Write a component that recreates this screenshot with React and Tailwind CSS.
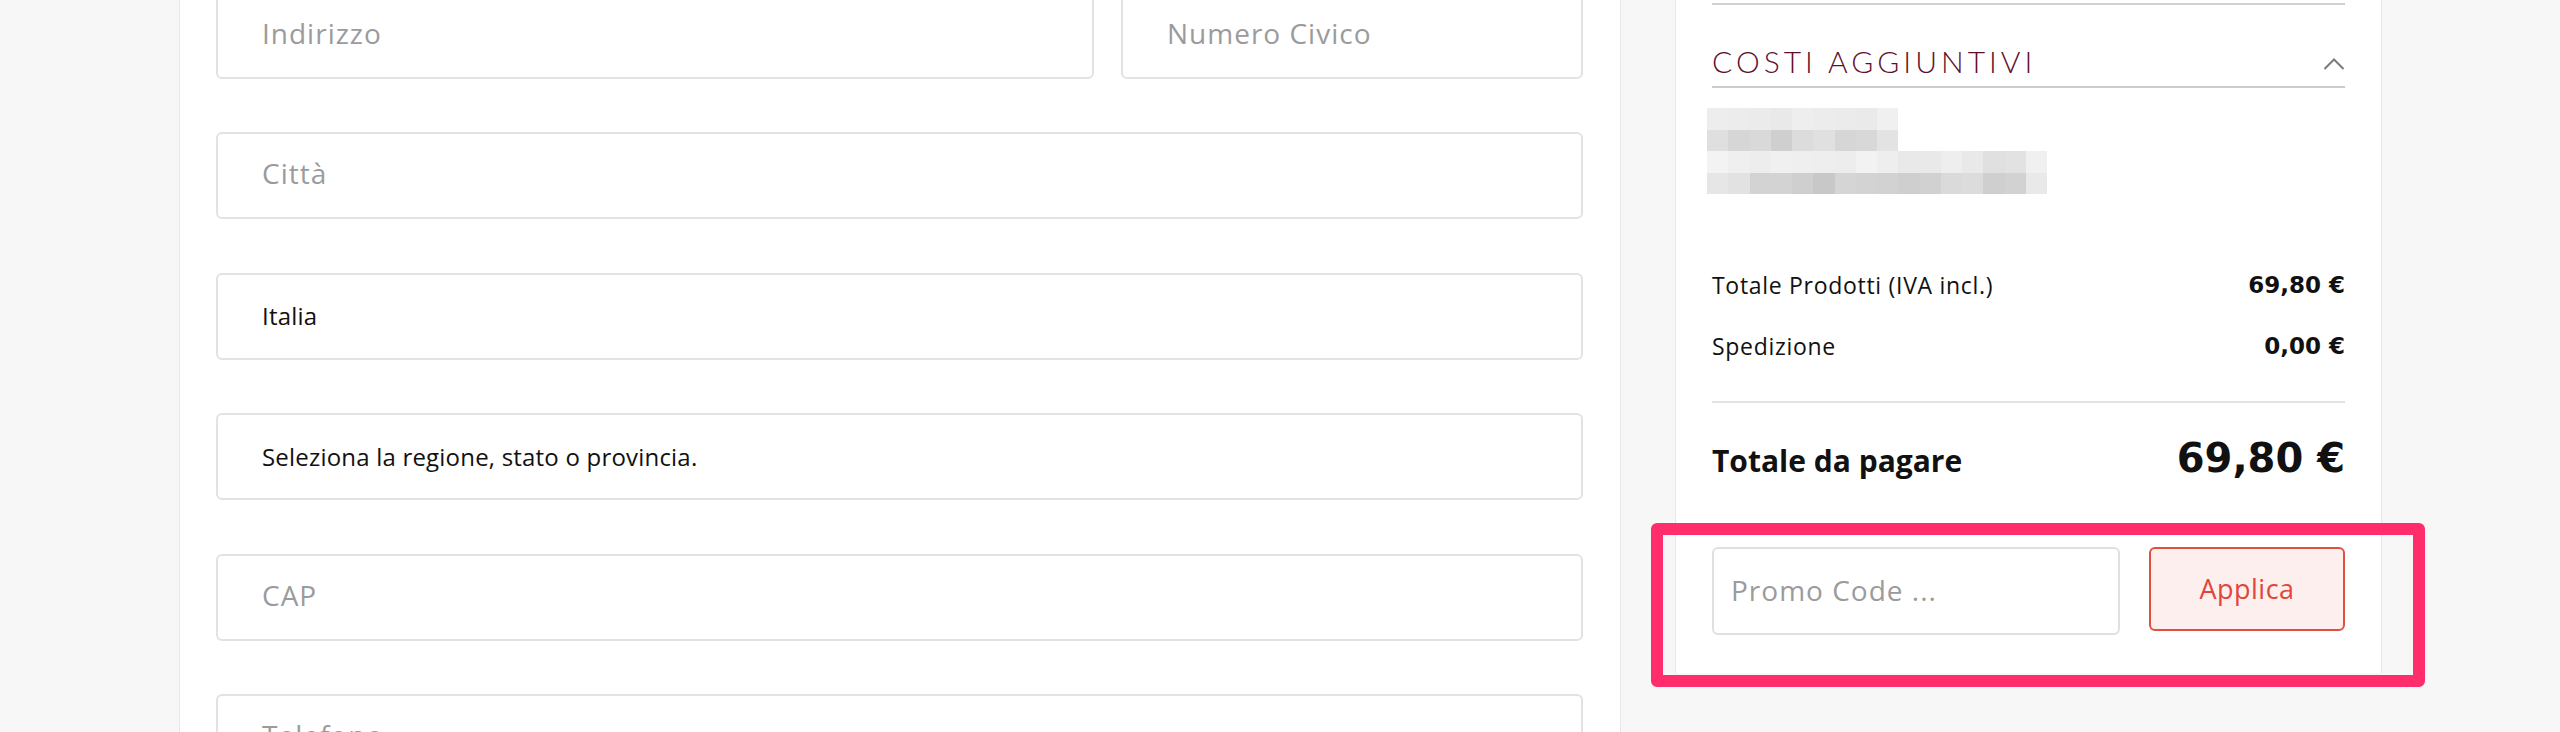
import React from "react";

const r1a = ["bg-[#ededed]","bg-[#ececec]","bg-[#ebebeb]","bg-[#e9e9e9]","bg-[#eeeeee]","bg-[#ececec]","bg-[#ebebeb]","bg-[#eaeaea]","bg-[#f0f0f0]"];
const r1b = ["bg-[#dfdfdf]","bg-[#d6d6d6]","bg-[#d9d9d9]","bg-[#cfcfcf]","bg-[#dcdcdc]","bg-[#e0e0e0]","bg-[#d6d6d6]","bg-[#d8d8d8]","bg-[#e3e3e3]"];
const r2a = ["bg-[#f3f3f3]","bg-[#efefef]","bg-[#ededed]","bg-[#f0f0f0]","bg-[#efefef]","bg-[#eeeeee]","bg-[#ededed]","bg-[#f2f2f2]","bg-[#eeeeee]","bg-[#e9e9e9]","bg-[#e9e9e9]","bg-[#eeeeee]","bg-[#e9e9e9]","bg-[#e0e0e0]","bg-[#e2e2e2]","bg-[#f0f0f0]"];
const r2b = ["bg-[#e6e6e6]","bg-[#e2e2e2]","bg-[#d3d3d3]","bg-[#d3d3d3]","bg-[#cfcfcf]","bg-[#c8c8c8]","bg-[#d5d5d5]","bg-[#d3d3d3]","bg-[#d2d2d2]","bg-[#cfcfcf]","bg-[#d1d1d1]","bg-[#dadada]","bg-[#dcdcdc]","bg-[#cfcfcf]","bg-[#d2d2d2]","bg-[#e9e9e9]"];

function CellRow({ cells }) {
  return (
    <div className="flex h-[21.5px]">
      {cells.map((c, i) => (
        <div key={i} className={`w-[21.25px] h-full ${c}`} />
      ))}
    </div>
  );
}

function Field({ children, value, className = "" }) {
  return (
    <div
      className={`h-[87px] flex items-center pl-[44px] border-2 border-[#e2e2e2] rounded-[6px] bg-white ${value ? "" : "pb-[5px]"} ${className}`}
    >
      {value ? (
        <span className="text-[24px] text-[#111111] tracking-[0.2px]">{value}</span>
      ) : (
        <span className="text-[28px] text-[#9b9b9b] tracking-[1px]">{children}</span>
      )}
    </div>
  );
}

export default function App() {
  return (
    <div className="relative w-[2560px] h-[732px] overflow-hidden bg-[#f7f7f7] font-['Open_Sans',sans-serif] flex">
      {/* left margin */}
      <div className="w-[179px] shrink-0" />

      {/* left form panel */}
      <div className="w-[1442px] shrink-0 h-[732px] overflow-hidden bg-white border-x border-[#e6e6e6] pl-[36px] pr-[37px]">
        <div className="mt-[-8px] flex flex-col gap-[53.4px]">
          <div className="flex gap-[27px]">
            <Field className="w-[878px]">Indirizzo</Field>
            <Field className="flex-1">Numero Civico</Field>
          </div>
          <Field>Città</Field>
          <Field value="Italia" />
          <Field value="Seleziona la regione, stato o provincia." />
          <Field>CAP</Field>
          <Field>Telefono</Field>
        </div>
      </div>

      {/* gap */}
      <div className="w-[54px] shrink-0" />

      {/* right summary panel */}
      <div className="w-[707px] shrink-0 h-[673px] bg-white border-x border-[#e6e6e6] pl-[36px] pr-[36px] flex flex-col">
        <div className="mt-[3px] h-[2px] bg-[#d0d0d0]" />
        <div className="h-[83px] flex items-end justify-between border-b-2 border-[#cccccc]">
          <span className="mb-[10px] text-[30px] leading-none font-light tracking-[4px] text-[#5e0f2b] font-['Lato',sans-serif]">
            COSTI AGGIUNTIVI
          </span>
          <svg className="mb-[16px]" width="22" height="13" viewBox="0 0 22 13" fill="none">
            <polyline points="1.5,12 11,2.5 20.5,12" stroke="#7a7a7a" strokeWidth="2" />
          </svg>
        </div>

        <div className="mt-[20px] flex flex-col -ml-[5px]">
          <CellRow cells={r1a} />
          <CellRow cells={r1b} />
          <CellRow cells={r2a} />
          <CellRow cells={r2b} />
        </div>

        <div className="mt-[75px] flex justify-between items-center h-[32px] text-[23px] text-[#111111]">
          <span className="tracking-[0.7px]">Totale Prodotti (IVA incl.)</span>
          <span className="font-bold font-['DejaVu_Sans',sans-serif]">69,80 €</span>
        </div>
        <div className="mt-[29px] flex justify-between items-center h-[32px] text-[23px] text-[#111111]">
          <span className="tracking-[0.7px]">Spedizione</span>
          <span className="font-bold font-['DejaVu_Sans',sans-serif]">0,00 €</span>
        </div>

        <div className="mt-[39px] h-[2px] bg-[#e3e3e3]" />

        <div className="mt-[27px] flex justify-between items-baseline text-[#111111]">
          <span className="text-[30px] font-bold leading-[40px]">Totale da pagare</span>
          <span className="text-[40px] font-bold leading-[56px] font-['DejaVu_Sans',sans-serif]">69,80 €</span>
        </div>

        <div className="mt-[61px] flex items-start gap-[29px]">
          <div className="w-[408px] h-[88px] border-2 border-[#e0e0e0] rounded-[6px] flex items-center pl-[17px] pb-[3px]">
            <span className="text-[28px] text-[#9b9b9b] tracking-[1px]">Promo Code ...</span>
          </div>
          <button className="flex-1 h-[84px] border-2 border-[#e0503f] rounded-[6px] bg-[#fdefee] text-[#e0463c] text-[27px] tracking-[0.5px] flex items-center justify-center">
            Applica
          </button>
        </div>
      </div>

      {/* annotation highlight */}
      <div className="absolute left-[1651px] top-[523px] w-[774px] h-[164px] border-[12px] border-[#ff2d6b] rounded-[6px] pointer-events-none" />
    </div>
  );
}
